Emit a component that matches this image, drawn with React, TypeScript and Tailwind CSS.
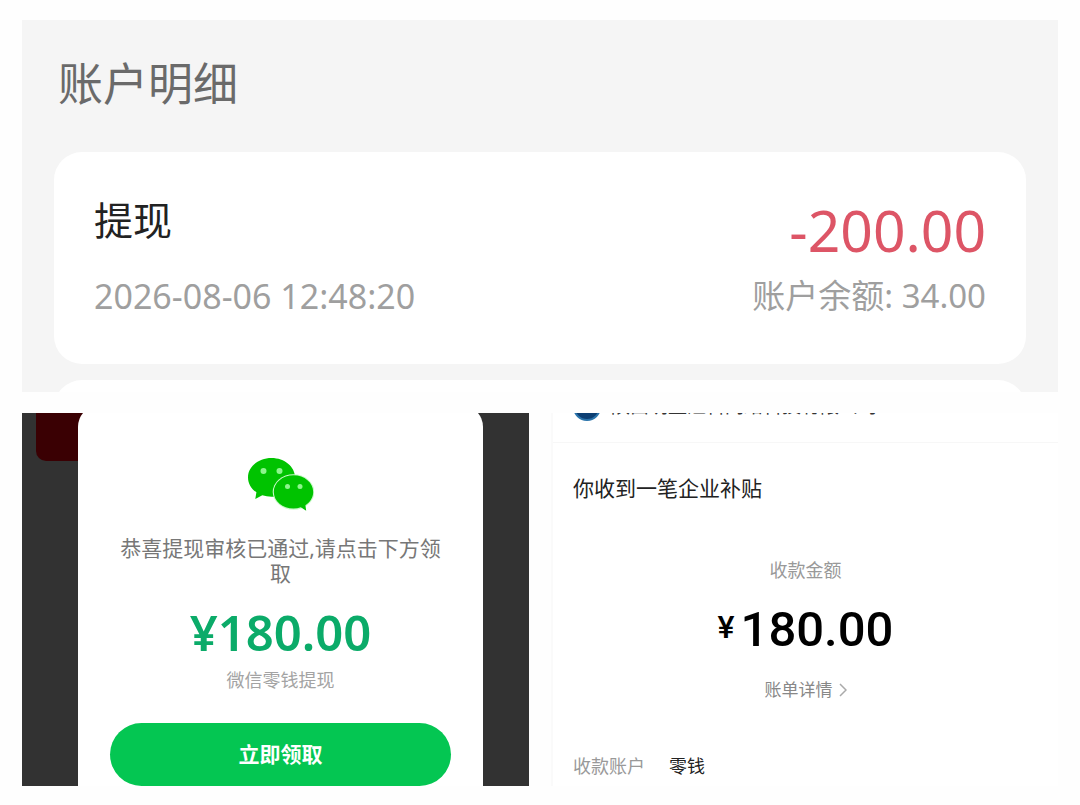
import { ReactNode } from "react";

function WeChatIcon() {
  return (
    <svg viewBox="0 0 66 53" className="h-[53px] w-[66px]" role="img" aria-label="微信">
      <path
        d="M23.5 0C10.5 0 0 8.6 0 19.4c0 6.100 3.300 11.300 8.400 14.900L7.300 41l7-3.700c2.900.9 6 1.400 9.200 1.400 13 0 23.500-8.600 23.500-19.300S36.500 0 23.500 0z"
        fill="#00c300"
      />
      <ellipse cx="45.500" cy="34" rx="20.800" ry="17.800" fill="#c9f9c9" />
      <path
        d="M45.500 17.200c-11 0-19.700 7.500-19.700 16.700s8.700 16.600 19.700 16.600c2.600 0 5.100-.4 7.300-1.200l5.400 3.400-.8-5.500c4.700-3.100 7.800-7.900 7.800-13.300 0-9.200-8.700-16.700-19.700-16.700z"
        fill="#00c300"
      />
      <circle cx="15.500" cy="13" r="3" fill="#8df58d" />
      <circle cx="31.500" cy="13" r="3" fill="#8df58d" />
      <circle cx="39.500" cy="28.500" r="2.500" fill="#8df58d" />
      <circle cx="52" cy="28.500" r="2.500" fill="#8df58d" />
    </svg>
  );
}

function Card({ children }: { children: ReactNode }) {
  return <article className="rounded-[28px] bg-white px-10 py-11">{children}</article>;
}

function AccountDetails() {
  return (
    <section className="bg-[#f5f5f5] px-8 pt-9">
      <h1 className="px-1 pb-10 text-[45px] leading-14 text-[#6a6a6a]">账户明细</h1>
      <Card>
        <div className="flex justify-between">
          <div className="flex flex-col justify-between">
            <h2 className="text-[39px] leading-12 text-[#222]">提现</h2>
            <time className="text-[34px] leading-12 text-[#9f9f9f]">2026-08-06 12:48:20</time>
          </div>
          <div className="flex flex-col gap-2 text-right">
            <p className="text-[57px] leading-[68px] text-[#dd5566]">-200.00</p>
            <p className="text-[33px] leading-12 text-[#9f9f9f]">账户余额: 34.00</p>
          </div>
        </div>
      </Card>
      <div className="mt-4 h-3 overflow-hidden">
        <div className="h-16 rounded-t-[28px] bg-white" />
      </div>
    </section>
  );
}

function WithdrawDialog() {
  return (
    <section className="relative overflow-hidden bg-[#323232] pr-[46px] pl-14">
      <div className="absolute top-0 left-3.5 h-12 w-24 rounded-bl-[10px] bg-[#3a0003]" />
      <div className="relative -mt-2 flex flex-col items-center rounded-t-[22px] bg-white px-8 pt-[53px]">
        <WeChatIcon />
        <p className="mt-[25px] px-1 text-center text-[21px] leading-[25px] text-[#777]">
          恭喜提现审核已通过,请点击下方领取
        </p>
        <p className="mt-4 text-[49px] leading-[60px] font-semibold text-[#0bab69]">¥180.00</p>
        <p className="mt-1.5 text-[18px] leading-6 text-[#a3a3a3]">微信零钱提现</p>
        <button
          type="button"
          className="mt-[31px] h-[63px] w-full rounded-full bg-[#04c652] text-[21px] font-bold text-white"
        >
          立即领取
        </button>
      </div>
    </section>
  );
}

function SubsidyReceipt() {
  return (
    <section className="border-l-2 border-[#fafafa] bg-white">
      <header className="h-[30px] overflow-hidden border-b border-[#f7f7f7] px-5">
        <div className="-mt-5 flex items-start gap-2.5">
          <span className="size-7 shrink-0 rounded-full border-2 border-[#2b74ab] bg-[#0c3f73]" />
          <span className="text-[19px] leading-[26px] whitespace-nowrap text-[#333]">
            陕西明盈汇科网络科技有限公司
          </span>
        </div>
      </header>
      <div className="px-5 pb-2">
        <h2 className="mt-[29px] text-[21px] leading-8 text-[#222]">你收到一笔企业补贴</h2>
        <div className="flex flex-col items-center">
          <p className="mt-[54px] text-[18px] leading-6 text-[#999]">收款金额</p>
          <p className="mt-[18px] flex items-start gap-1.5 font-[Roboto,sans-serif] font-medium text-black">
            <span className="text-[32px] leading-[54px]">¥</span>
            <span className="text-[49px] leading-[60px]">180.00</span>
          </p>
          <a href="#bill" className="mt-[18px] flex items-center gap-1.5 text-[17px] leading-6 text-[#888]">
            账单详情
            <svg viewBox="0 0 8 14" className="h-3.5 w-2" fill="none" stroke="#aaa" strokeWidth="1.500">
              <path d="M1 1l6 6-6 6" />
            </svg>
          </a>
        </div>
        <dl className="mt-[52px] flex gap-6 text-[18px] leading-6">
          <dt className="text-[#999]">收款账户</dt>
          <dd className="text-[#222]">零钱</dd>
        </dl>
      </div>
    </section>
  );
}

export default function App() {
  return (
    <main className="min-h-screen bg-[#fefefe] px-[22px] py-5 font-['Noto_Sans','Noto_Sans_CJK_SC',sans-serif]">
      <AccountDetails />
      <div className="mt-[21px] grid grid-cols-2 gap-[22px]">
        <WithdrawDialog />
        <SubsidyReceipt />
      </div>
    </main>
  );
}
